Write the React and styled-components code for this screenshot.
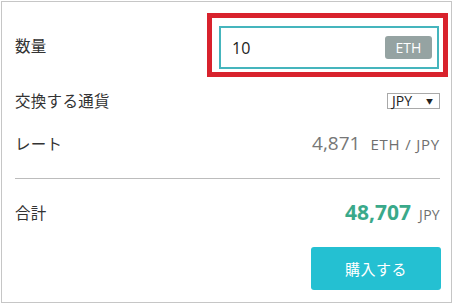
import React from "react";
import styled, { createGlobalStyle } from "styled-components";

const Global = createGlobalStyle`
  html, body { margin: 0; padding: 0; background: #fff; }
  body { font-family: "Open Sans", "Noto Sans CJK JP", sans-serif; color: #333; }
`;

const Card = styled.div`
  box-sizing: border-box;
  margin: 1px 0 0 1px;
  width: 451px;
  height: 302px;
  border: 1px solid #c6c6c6;
  padding: 11px 11px 0 13px;
  display: flex;
  flex-direction: column;
`;

const Row = styled.div`
  display: flex;
  align-items: center;
  justify-content: space-between;
  height: ${(p) => p.$h}px;
`;

const Label = styled.span`
  font-family: "Noto Sans CJK JP", sans-serif;
  font-size: 15.5px;
  color: #333;
  letter-spacing: 0.3px;
`;

const Highlight = styled.div`
  box-sizing: border-box;
  border: 5px solid #d8222d;
  padding: 8px 3px 3px 7px;
  margin-right: -8px;
  height: 64px;
  width: 241px;
`;

const InputBox = styled.div`
  box-sizing: border-box;
  height: 43px;
  width: 220px;
  border: 2px solid #45b5bd;
  display: flex;
  align-items: center;
  justify-content: space-between;
  padding: 0 5px 0 11px;
`;

const InputValue = styled.span`
  font-size: 16px;
  color: #222;
`;

const Badge = styled.span`
  background: #95a3a2;
  color: #fff;
  font-size: 14px;
  border-radius: 3px;
  height: 23px;
  width: 47px;
  display: flex;
  align-items: center;
  justify-content: center;
`;

const Select = styled.div`
  box-sizing: border-box;
  height: 16px;
  width: 53px;
  border: 1px solid #a9a9a9;
  display: flex;
  align-items: center;
  justify-content: space-between;
  padding: 0 6px 0 4px;
  font-size: 14px;
  color: #222;
  margin-top: 1px;
`;

const Arrow = styled.span`
  font-size: 7px;
`;

const ValueGroup = styled.div`
  display: flex;
  align-items: baseline;
  gap: ${(p) => p.$gap}px;
`;

const RateNumber = styled.span`
  font-size: 19px;
  color: #777;
`;

const Unit = styled.span`
  font-size: ${(p) => p.$fs || 15}px;
  color: #6f6f6f;
  letter-spacing: ${(p) => p.$ls || 0.8}px;
`;

const Total = styled.span`
  font-size: 21px;
  font-weight: 700;
  color: #3aa98a;
`;

const Divider = styled.hr`
  border: 0;
  border-top: 1px solid #bcbcbc;
  margin: 15px 0 0 0;
  height: 0;
`;

const ButtonRow = styled.div`
  display: flex;
  justify-content: flex-end;
  margin-top: 2px;
`;

const Button = styled.button`
  width: 130px;
  height: 43px;
  border: 0;
  border-radius: 3px;
  background: #24c0d2;
  color: #fff;
  font-family: "Noto Sans CJK JP", sans-serif;
  font-size: 15px;
  letter-spacing: 0.5px;
  margin-right: -1px;
`;

export default function App() {
  return (
    <>
      <Global />
      <Card>
        <Row $h={64}>
          <Label>数量</Label>
          <Highlight>
            <InputBox>
              <InputValue>10</InputValue>
              <Badge>ETH</Badge>
            </InputBox>
          </Highlight>
        </Row>
        <Row $h={46}>
          <Label>交換する通貨</Label>
          <Select>
            <span>JPY</span>
            <Arrow>▼</Arrow>
          </Select>
        </Row>
        <Row $h={40}>
          <Label>レート</Label>
          <ValueGroup $gap={10}>
            <RateNumber>4,871</RateNumber>
            <Unit>ETH / JPY</Unit>
          </ValueGroup>
        </Row>
        <Divider />
        <Row $h={66}>
          <Label>合計</Label>
          <ValueGroup $gap={8}>
            <Total>48,707</Total>
            <Unit $fs={14} $ls={0.3}>JPY</Unit>
          </ValueGroup>
        </Row>
        <ButtonRow>
          <Button>購入する</Button>
        </ButtonRow>
      </Card>
    </>
  );
}
